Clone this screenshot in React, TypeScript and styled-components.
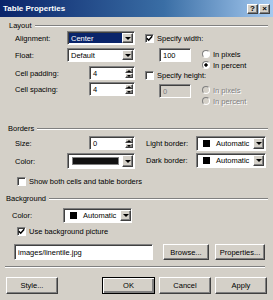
import styled, { createGlobalStyle } from 'styled-components';

const FACE = '#d4d0c8';
const SHADOW = '#808080';
const DARK = '#404040';
const NAVY = '#0a246a';

const GlobalStyle = createGlobalStyle`
  html, body {
    margin: 0;
    padding: 0;
    background: ${FACE};
  }
`;

const raised = `
  background: ${FACE};
  border: 1px solid;
  border-color: #fff ${DARK} ${DARK} #fff;
  box-shadow: inset -1px -1px ${SHADOW};
`;

const sunken = `
  border: 1px solid;
  border-color: ${SHADOW} #fff #fff ${SHADOW};
  box-shadow: inset 1px 1px ${DARK};
`;

const Dialog = styled.div`
  width: 273px;
  height: 300px;
  overflow: hidden;
  background: ${FACE};
  font-family: 'Liberation Sans', Arial, sans-serif;
  font-size: 7.5px;
  color: #000;
  display: flex;
  flex-direction: column;
`;

const TitleBar = styled.div`
  height: 17px;
  flex: none;
  display: flex;
  align-items: center;
  justify-content: space-between;
  padding: 0 3px;
  background: linear-gradient(to right, ${NAVY} 0%, #3a6ea5 60%, #a6caf0 100%);
  color: #fff;
  font-weight: bold;
  font-size: 8px;
`;

const CaptionButtons = styled.div`
  display: flex;
  gap: 1px;
`;

const CaptionButton = styled.div`
  width: 11px;
  height: 10px;
  box-sizing: border-box;
  ${raised}
  display: flex;
  align-items: center;
  justify-content: center;
  color: #000;
  font-size: 8px;
  font-weight: bold;
  line-height: 1;
`;

const GroupHeader = styled.div<{ $left: number; $top: number }>`
  display: flex;
  align-items: center;
  gap: 3px;
  height: 9px;
  margin: ${(p) => p.$top}px 5px 0 ${(p) => p.$left}px;

  &::after {
    content: '';
    flex: 1;
    border-top: 1px solid ${SHADOW};
    border-bottom: 1px solid #fff;
  }
`;

const Columns = styled.div<{ $top: number; $left?: number }>`
  display: flex;
  align-items: flex-start;
  margin-top: ${(p) => p.$top}px;
  padding-left: ${(p) => p.$left ?? 15}px;
`;

const Column = styled.div<{ $width?: number; $left?: number }>`
  display: flex;
  flex-direction: column;
  width: ${(p) => (p.$width ? `${p.$width}px` : 'auto')};
  margin-left: ${(p) => p.$left ?? 0}px;
`;

const FieldRow = styled.div<{ $mt?: number; $h?: number }>`
  display: flex;
  align-items: center;
  justify-content: space-between;
  height: ${(p) => p.$h ?? 14}px;
  margin-top: ${(p) => p.$mt ?? 0}px;
`;

const Select = styled.div<{ $w: number }>`
  width: ${(p) => p.$w}px;
  height: 14px;
  box-sizing: border-box;
  background: #fff;
  ${sunken}
  display: flex;
  padding: 1px;
`;

const SelectValue = styled.div<{ $selected?: boolean }>`
  flex: 1;
  display: flex;
  align-items: center;
  padding-left: 2px;
  background: ${(p) => (p.$selected ? NAVY : 'transparent')};
  color: ${(p) => (p.$selected ? '#fff' : '#000')};
`;

const DropButton = styled.div`
  width: 11px;
  flex: none;
  box-sizing: border-box;
  ${raised}
  display: flex;
  align-items: center;
  justify-content: center;

  &::before {
    content: '';
    border-left: 3px solid transparent;
    border-right: 3px solid transparent;
    border-top: 3px solid #000;
  }
`;

const Spin = styled.div`
  width: 46px;
  height: 14px;
  box-sizing: border-box;
  background: #fff;
  ${sunken}
  display: flex;
  padding: 1px;
`;

const SpinValue = styled.div`
  flex: 1;
  display: flex;
  align-items: center;
  padding-left: 2px;
`;

const SpinButtons = styled.div`
  width: 8px;
  display: flex;
  flex-direction: column;
`;

const SpinButton = styled.div<{ $up?: boolean }>`
  flex: 1;
  box-sizing: border-box;
  ${raised}
  display: flex;
  align-items: center;
  justify-content: center;

  &::before {
    content: '';
    border-left: 2px solid transparent;
    border-right: 2px solid transparent;
    ${(p) => (p.$up ? 'border-bottom: 2px solid #000;' : 'border-top: 2px solid #000;')}
  }
`;

const TextBox = styled.div<{ $w: number; $h?: number; $disabled?: boolean }>`
  width: ${(p) => p.$w}px;
  height: ${(p) => p.$h ?? 14}px;
  box-sizing: border-box;
  background: ${(p) => (p.$disabled ? FACE : '#fff')};
  color: ${(p) => (p.$disabled ? SHADOW : '#000')};
  ${sunken}
  display: flex;
  align-items: center;
  padding-left: 3px;
`;

const CheckRow = styled.div<{ $mt?: number; $h?: number; $left?: number }>`
  display: flex;
  align-items: center;
  gap: 3px;
  height: ${(p) => p.$h ?? 10}px;
  margin-top: ${(p) => p.$mt ?? 0}px;
  padding-left: ${(p) => p.$left ?? 0}px;
`;

const CheckBox = styled.span`
  width: 9px;
  height: 9px;
  box-sizing: border-box;
  background: #fff;
  ${sunken}
  display: flex;
  align-items: center;
  justify-content: center;
`;

const SubBlock = styled.div<{ $mt: number }>`
  display: flex;
  align-items: flex-start;
  margin: ${(p) => p.$mt}px 0 0 14px;
`;

const RadioGroup = styled.div`
  display: flex;
  flex-direction: column;
  gap: 1px;
  padding-top: 1px;
  margin-left: 11px;
`;

const RadioRow = styled.div<{ $disabled?: boolean }>`
  display: flex;
  align-items: center;
  gap: 3px;
  height: 10px;
  color: ${(p) => (p.$disabled ? SHADOW : '#000')};
  text-shadow: ${(p) => (p.$disabled ? '1px 1px 0 #fff' : 'none')};
`;

const RadioCircle = styled.span<{ $checked?: boolean; $disabled?: boolean }>`
  width: 8px;
  height: 8px;
  box-sizing: border-box;
  border-radius: 50%;
  border: 1px solid;
  border-color: ${SHADOW} #fff #fff ${SHADOW};
  background: ${(p) =>
    p.$checked
      ? 'radial-gradient(circle, #000 0 1.4px, #fff 1.9px)'
      : p.$disabled
        ? FACE
        : '#fff'};
`;

const ColorPicker = styled.div<{ $w: number; $h?: number }>`
  width: ${(p) => p.$w}px;
  height: ${(p) => p.$h ?? 15}px;
  box-sizing: border-box;
  background: #fff;
  ${sunken}
  display: flex;
  padding: 1px;
`;

const ColorFace = styled.div`
  flex: 1;
  display: flex;
  align-items: center;
  gap: 6px;
  padding: 0 4px 0 5px;
`;

const Swatch = styled.span`
  width: 7px;
  height: 7px;
  background: #000;
`;

const ColorBar = styled.div`
  flex: 1;
  margin: 2px 3px 2px 3px;
  background: #111;
  border: 1px solid ${SHADOW};
`;

const PathRow = styled.div`
  display: flex;
  align-items: center;
  height: 16px;
  margin-top: 8px;
  padding-left: 14px;
`;

const Button = styled.div<{ $w: number; $left?: number; $default?: boolean }>`
  width: ${(p) => p.$w}px;
  height: 100%;
  margin-left: ${(p) => p.$left ?? 0}px;
  box-sizing: border-box;
  ${raised}
  ${(p) =>
    p.$default
      ? `outline: 1px solid #000; outline-offset: -1px; box-shadow: inset 1px 1px #fff, inset -2px -2px ${SHADOW};`
      : ''}
  display: flex;
  align-items: center;
  justify-content: center;
`;

const Separator = styled.div`
  margin: 6px 8px 0 5px;
  border-top: 1px solid ${SHADOW};
  border-bottom: 1px solid #fff;
`;

const ButtonBar = styled.div`
  display: flex;
  justify-content: space-between;
  height: 17px;
  margin-top: 9px;
  padding: 0 6px;
`;

const ButtonGroup = styled.div`
  display: flex;
  gap: 4px;
`;

const Check = () => (
  <svg width="7" height="7" viewBox="0 0 7 7">
    <path d="M0.8 3.2 L2.7 5.2 L6.2 1.2" fill="none" stroke="#000" strokeWidth="1.5" />
  </svg>
);

const SpinBox = ({ value }: { value: string }) => (
  <Spin>
    <SpinValue>{value}</SpinValue>
    <SpinButtons>
      <SpinButton $up />
      <SpinButton />
    </SpinButtons>
  </Spin>
);

const AutoColor = ({ width }: { width: number }) => (
  <ColorPicker $w={width}>
    <ColorFace>
      <Swatch />
      <span>Automatic</span>
    </ColorFace>
    <DropButton />
  </ColorPicker>
);

export default function App() {
  return (
    <>
      <GlobalStyle />
      <Dialog>
        <TitleBar>
          <span>Table Properties</span>
          <CaptionButtons>
            <CaptionButton>?</CaptionButton>
            <CaptionButton>×</CaptionButton>
          </CaptionButtons>
        </TitleBar>

        <GroupHeader $left={9} $top={4}>Layout</GroupHeader>
        <Columns $top={1}>
          <Column $width={120}>
            <FieldRow>
              <span>Alignment:</span>
              <Select $w={68}>
                <SelectValue $selected>Center</SelectValue>
                <DropButton />
              </Select>
            </FieldRow>
            <FieldRow $mt={3}>
              <span>Float:</span>
              <Select $w={68}>
                <SelectValue>Default</SelectValue>
                <DropButton />
              </Select>
            </FieldRow>
            <FieldRow $mt={4}>
              <span>Cell padding:</span>
              <SpinBox value="4" />
            </FieldRow>
            <FieldRow $mt={2}>
              <span>Cell spacing:</span>
              <SpinBox value="4" />
            </FieldRow>
          </Column>

          <Column $left={10}>
            <CheckRow $h={14}>
              <CheckBox>
                <Check />
              </CheckBox>
              <span>Specify width:</span>
            </CheckRow>
            <SubBlock $mt={3}>
              <TextBox $w={32}>100</TextBox>
              <RadioGroup>
                <RadioRow>
                  <RadioCircle />
                  <span>In pixels</span>
                </RadioRow>
                <RadioRow>
                  <RadioCircle $checked />
                  <span>In percent</span>
                </RadioRow>
              </RadioGroup>
            </SubBlock>
            <CheckRow>
              <CheckBox />
              <span>Specify height:</span>
            </CheckRow>
            <SubBlock $mt={4}>
              <TextBox $w={32} $disabled>
                0
              </TextBox>
              <RadioGroup>
                <RadioRow $disabled>
                  <RadioCircle $disabled />
                  <span>In pixels</span>
                </RadioRow>
                <RadioRow $disabled>
                  <RadioCircle $disabled />
                  <span>In percent</span>
                </RadioRow>
              </RadioGroup>
            </SubBlock>
          </Column>
        </Columns>

        <GroupHeader $left={8} $top={18}>Borders</GroupHeader>
        <Columns $top={3}>
          <Column $width={120}>
            <FieldRow>
              <span>Size:</span>
              <SpinBox value="0" />
            </FieldRow>
            <FieldRow $mt={3} $h={16}>
              <span>Color:</span>
              <ColorPicker $w={68} $h={16}>
                <ColorBar />
                <DropButton />
              </ColorPicker>
            </FieldRow>
          </Column>
          <Column $width={120} $left={11}>
            <FieldRow $h={15}>
              <span>Light border:</span>
              <AutoColor width={70} />
            </FieldRow>
            <FieldRow $mt={2} $h={15}>
              <span>Dark border:</span>
              <AutoColor width={70} />
            </FieldRow>
          </Column>
        </Columns>
        <CheckRow $mt={7} $left={17}>
          <CheckBox />
          <span>Show both cells and table borders</span>
        </CheckRow>

        <GroupHeader $left={6} $top={8}>Background</GroupHeader>
        <Columns $top={5} $left={12}>
          <Column $width={120}>
            <FieldRow $h={15}>
              <span>Color:</span>
              <AutoColor width={69} />
            </FieldRow>
          </Column>
        </Columns>
        <CheckRow $mt={3} $left={17}>
          <CheckBox>
            <Check />
          </CheckBox>
          <span>Use background picture</span>
        </CheckRow>
        <PathRow>
          <TextBox $w={139} $h={16}>images/linentile.jpg</TextBox>
          <Button $w={46} $left={10}>Browse...</Button>
          <Button $w={50} $left={6}>Properties...</Button>
        </PathRow>

        <Separator />
        <ButtonBar>
          <Button $w={52}>Style...</Button>
          <ButtonGroup>
            <Button $w={53} $default>OK</Button>
            <Button $w={52}>Cancel</Button>
            <Button $w={52}>Apply</Button>
          </ButtonGroup>
        </ButtonBar>
      </Dialog>
    </>
  );
}
